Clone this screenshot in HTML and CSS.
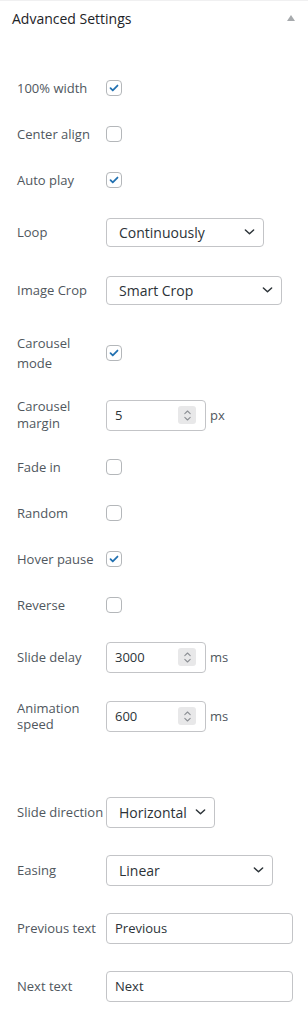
FILE: index.html
```html
<!DOCTYPE html>
<html>
<head>
    <link rel="stylesheet" href="styles.css">
</head>
<body>
    <div class="postbox">
        <div class="postbox-header">
            <h2 class="hndle">Advanced Settings</h2>
            <span class="toggle-arrow"></span>
        </div>

        <div class="settings">
            <div class="row">
                <div class="label">100% width</div>
                <span class="checkbox checked"><svg viewBox="0 0 16 16"><path d="M4 8.2l2.6 2.6L12 5.2"/></svg></span>
            </div>
            <div class="row">
                <div class="label">Center align</div>
                <span class="checkbox"></span>
            </div>
            <div class="row">
                <div class="label">Auto play</div>
                <span class="checkbox checked"><svg viewBox="0 0 16 16"><path d="M4 8.2l2.6 2.6L12 5.2"/></svg></span>
            </div>
            <div class="row row-field">
                <div class="label">Loop</div>
                <div class="select select-loop">Continuously<svg class="chevron" viewBox="0 0 12 8"><path d="M1.5 1.8L6 6l4.5-4.2"/></svg></div>
            </div>
            <div class="row row-field">
                <div class="label">Image Crop</div>
                <div class="select select-crop">Smart Crop<svg class="chevron" viewBox="0 0 12 8"><path d="M1.5 1.8L6 6l4.5-4.2"/></svg></div>
            </div>
            <div class="row row-carousel">
                <div class="label label-loose">Carousel<br>mode</div>
                <span class="checkbox checked"><svg viewBox="0 0 16 16"><path d="M4 8.2l2.6 2.6L12 5.2"/></svg></span>
            </div>
            <div class="row row-field row-margin">
                <div class="label label-tight">Carousel<br>margin</div>
                <div class="number"><span class="value">5</span><span class="spinner"><svg viewBox="0 0 10 14"><path d="M2 5l3-3 3 3M2 9l3 3 3-3"/></svg></span></div>
                <span class="unit">px</span>
            </div>
            <div class="row">
                <div class="label">Fade in</div>
                <span class="checkbox"></span>
            </div>
            <div class="row">
                <div class="label">Random</div>
                <span class="checkbox"></span>
            </div>
            <div class="row">
                <div class="label">Hover pause</div>
                <span class="checkbox checked"><svg viewBox="0 0 16 16"><path d="M4 8.2l2.6 2.6L12 5.2"/></svg></span>
            </div>
            <div class="row">
                <div class="label">Reverse</div>
                <span class="checkbox"></span>
            </div>
            <div class="row row-field">
                <div class="label">Slide delay</div>
                <div class="number"><span class="value">3000</span><span class="spinner"><svg viewBox="0 0 10 14"><path d="M2 5l3-3 3 3M2 9l3 3 3-3"/></svg></span></div>
                <span class="unit">ms</span>
            </div>
            <div class="row row-field row-speed">
                <div class="label label-tighter">Animation<br>speed</div>
                <div class="number"><span class="value">600</span><span class="spinner"><svg viewBox="0 0 10 14"><path d="M2 5l3-3 3 3M2 9l3 3 3-3"/></svg></span></div>
                <span class="unit">ms</span>
            </div>
            <div class="row-hidden"></div>
            <div class="row row-field">
                <div class="label">Slide direction</div>
                <div class="select select-direction">Horizontal<svg class="chevron" viewBox="0 0 12 8"><path d="M1.5 1.8L6 6l4.5-4.2"/></svg></div>
            </div>
            <div class="row row-field">
                <div class="label">Easing</div>
                <div class="select select-easing">Linear<svg class="chevron" viewBox="0 0 12 8"><path d="M1.5 1.8L6 6l4.5-4.2"/></svg></div>
            </div>
            <div class="row row-field">
                <div class="label">Previous text</div>
                <div class="text-input">Previous</div>
            </div>
            <div class="row row-field">
                <div class="label">Next text</div>
                <div class="text-input">Next</div>
            </div>
        </div>
    </div>
</body>
</html>
```

FILE: styles.css
```css
body {
    margin: 0;
    background: #fff;
    font-family: "Open Sans", "Noto Sans", sans-serif;
    color: #50575e;
}

.postbox {
    border-top: 1px solid #f0f0f1;
}

.postbox-header {
    display: flex;
    align-items: center;
    justify-content: space-between;
    height: 34px;
    padding: 0 12px;
}

.hndle {
    margin: 0;
    font-size: 14px;
    font-weight: 400;
    color: #1d2327;
}

.toggle-arrow {
    width: 0;
    height: 0;
    margin-right: 1px;
    border-left: 4px solid transparent;
    border-right: 4px solid transparent;
    border-bottom: 6px solid #a7aaad;
}

.settings {
    padding-top: 30px;
}

.row {
    display: flex;
    align-items: center;
    height: 46px;
    padding-left: 17px;
    font-size: 13px;
}

.row-field {
    height: 58px;
}

.row-carousel {
    height: 67px;
}

.row-margin {
    height: 58px;
}

.row-speed {
    height: 60px;
}

.row-hidden {
    height: 37px;
}

.label {
    width: 89px;
    flex-shrink: 0;
    white-space: nowrap;
}

.label-loose {
    line-height: 20px;
    padding-top: 1px;
}

.label-tight {
    line-height: 17px;
}

.label-tighter {
    line-height: 16px;
}

.checkbox {
    display: flex;
    align-items: center;
    justify-content: center;
    width: 14px;
    height: 14px;
    border: 1px solid #b4b7ba;
    border-radius: 4px;
    background: #fff;
}

.checkbox svg {
    width: 16px;
    height: 16px;
    fill: none;
    stroke: #2271b1;
    stroke-width: 2;
    stroke-linecap: round;
    stroke-linejoin: round;
}

.select,
.number,
.text-input {
    display: flex;
    align-items: center;
    box-sizing: border-box;
    border: 1px solid #c3c4c7;
    border-radius: 4px;
    background: #fff;
    color: #2c3338;
    font-size: 14px;
}

.select {
    justify-content: space-between;
    height: 29px;
    padding: 0 8px 0 12px;
}

.select-loop { width: 158px; }
.select-crop { width: 176px; }
.select-direction { width: 109px; height: 31px; }
.select-easing { width: 167px; height: 31px; }

.chevron {
    width: 11px;
    height: 8px;
    fill: none;
    stroke: #2c3338;
    stroke-width: 1.6;
    stroke-linecap: round;
    stroke-linejoin: round;
}

.number {
    width: 100px;
    height: 31px;
    padding: 0 9px 0 8px;
    justify-content: space-between;
    font-size: 13px;
}

.spinner {
    display: flex;
    align-items: center;
    justify-content: center;
    width: 18px;
    height: 18px;
    border-radius: 3px;
    background: #e8e8e9;
}

.spinner svg {
    width: 9px;
    height: 13px;
    fill: none;
    stroke: #8c8f94;
    stroke-width: 1.2;
    stroke-linecap: round;
    stroke-linejoin: round;
}

.unit {
    margin-left: 4px;
    color: #50575e;
}

.text-input {
    width: 187px;
    height: 31px;
    padding: 0 8px;
    font-size: 13px;
}
```
